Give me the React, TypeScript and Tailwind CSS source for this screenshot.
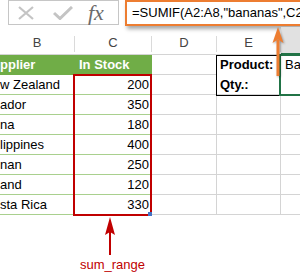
import React from "react"

const rows: [string, number][] = [
  ["w Zealand", 200],
  ["ador", 350],
  ["na", 180],
  ["lippines", 400],
  ["nan", 250],
  ["and", 120],
  ["sta Rica", 330],
]

function HeaderCell({ label, width }: { label: string; width: string }) {
  return (
    <div className={`flex ${width} shrink-0 border-b border-[#d4d4d4]`}>
      <div className="flex flex-1 items-center justify-center pt-[4px]">{label}</div>
      <div className="mt-[9px] mb-[2px] w-px bg-[#dadada]" />
    </div>
  )
}

export default function App() {
  return (
    <div className="relative h-[279px] w-[300px] overflow-hidden bg-white font-['Liberation_Sans',Arial,sans-serif] text-black">
      {/* formula bar */}
      <div className="flex h-[27px] pl-[8px]">
        <div className="flex h-[25px] w-[111px] shrink-0 items-center border border-[#c6c6c6]">
          <svg width="16" height="14" viewBox="0 0 16 14" className="ml-[9px]">
            <path d="M1 1 L15 13 M15 1 L1 13" stroke="#c4c4c4" strokeWidth="2.2" fill="none" />
          </svg>
          <svg width="20" height="14" viewBox="0 0 20 14" className="ml-[19px]">
            <path d="M1 7 L7 12.5 L19 1" stroke="#c4c4c4" strokeWidth="3" fill="none" />
          </svg>
          <span className="ml-[15px] font-['Liberation_Serif',serif] text-[22px] italic leading-none text-[#6b6b6b]">
            fx
          </span>
        </div>
        <div className="ml-[6px] flex h-[26px] w-[190px] shrink-0 items-center overflow-hidden whitespace-nowrap border-2 border-[#ed7d31] pl-[5px] text-[13px] shadow-[2px_3px_4px_rgba(0,0,0,0.35)]">
          =SUMIF(A2:A8,"bananas",C2:C8)
        </div>
      </div>

      {/* column headers */}
      <div className="flex h-[28px] text-[13px] text-[#444]">
        <HeaderCell label="B" width="w-[75px]" />
        <HeaderCell label="C" width="w-[77px]" />
        <HeaderCell label="D" width="w-[65px]" />
        <HeaderCell label="E" width="w-[64px]" />
        <div className="flex-1 border-b-2 border-[#217346] bg-[#e1e1e1]" />
      </div>

      {/* sheet rows */}
      <div className="text-[13px]">
        <div className="flex h-[20px]">
          <div className="flex w-[152px] shrink-0 items-center bg-[#70ad47] font-bold text-white">
            <span className="w-[75px] overflow-hidden whitespace-nowrap">pplier</span>
            <span className="pl-[4px]">In Stock</span>
          </div>
          <div className="w-[65px] shrink-0 border-b border-r border-[#d4d4d4]" />
          <div className="flex w-[64px] shrink-0 items-center border-r border-[#d4d4d4] pl-[3px] font-bold">
            Product:
          </div>
          <div className="flex flex-1 items-center overflow-hidden whitespace-nowrap pl-[4px]">Bananas</div>
        </div>
        {rows.map(([supplier, stock], i) => (
          <div key={i} className="flex h-[20px]">
            <div className="flex w-[75px] shrink-0 items-center overflow-hidden whitespace-nowrap border-b border-[#a9d08e]">
              {supplier}
            </div>
            <div className="flex w-[77px] shrink-0 items-center justify-end border-b border-[#a9d08e] pr-[3px]">
              {stock}
            </div>
            <div className="w-[65px] shrink-0 border-b border-r border-[#d4d4d4]" />
            <div className="flex w-[64px] shrink-0 items-center border-b border-r border-[#d4d4d4] pl-[3px] font-bold">
              {i === 0 ? "Qty.:" : ""}
            </div>
            <div className="flex-1 border-b border-[#d4d4d4]" />
          </div>
        ))}
      </div>

      {/* sum_range callout */}
      <div className="ml-[74px] flex w-[77px] flex-col items-center">
        <svg width="14" height="40" viewBox="0 0 14 40" className="-ml-[6px] mt-[2px]">
          <path d="M7 0 L12 18 L7 15 L2 18 Z" fill="#c00000" />
          <path d="M7 14 V38" stroke="#c00000" strokeWidth="2" />
        </svg>
        <span className="mt-[1px] text-[13px] leading-none text-[#c00000]">sum_range</span>
      </div>

      {/* selection overlays */}
      <div className="absolute left-[73px] top-[74px] h-[142px] w-[79px] border-2 border-[#c00000]" />
      <div className="absolute left-[148px] top-[212px] h-[4px] w-[4px] bg-[#4472c4]" />
      <div className="absolute left-[216px] top-[55px] h-[41px] w-[65px] border border-black" />
      <div className="absolute left-[279px] top-[54px] h-[42px] w-[30px] border-2 border-[#217346]" />

      {/* formula pointer */}
      <svg width="16" height="52" viewBox="0 0 16 52" className="absolute left-[271px] top-[26px] drop-shadow-[1px_1px_1px_rgba(0,0,0,0.35)]">
        <path d="M7 1 L12.5 17 L7 13.5 L1.5 17 Z" fill="#ed7d31" />
        <path d="M7 14 V50" stroke="#ed7d31" strokeWidth="3" />
      </svg>
    </div>
  )
}
